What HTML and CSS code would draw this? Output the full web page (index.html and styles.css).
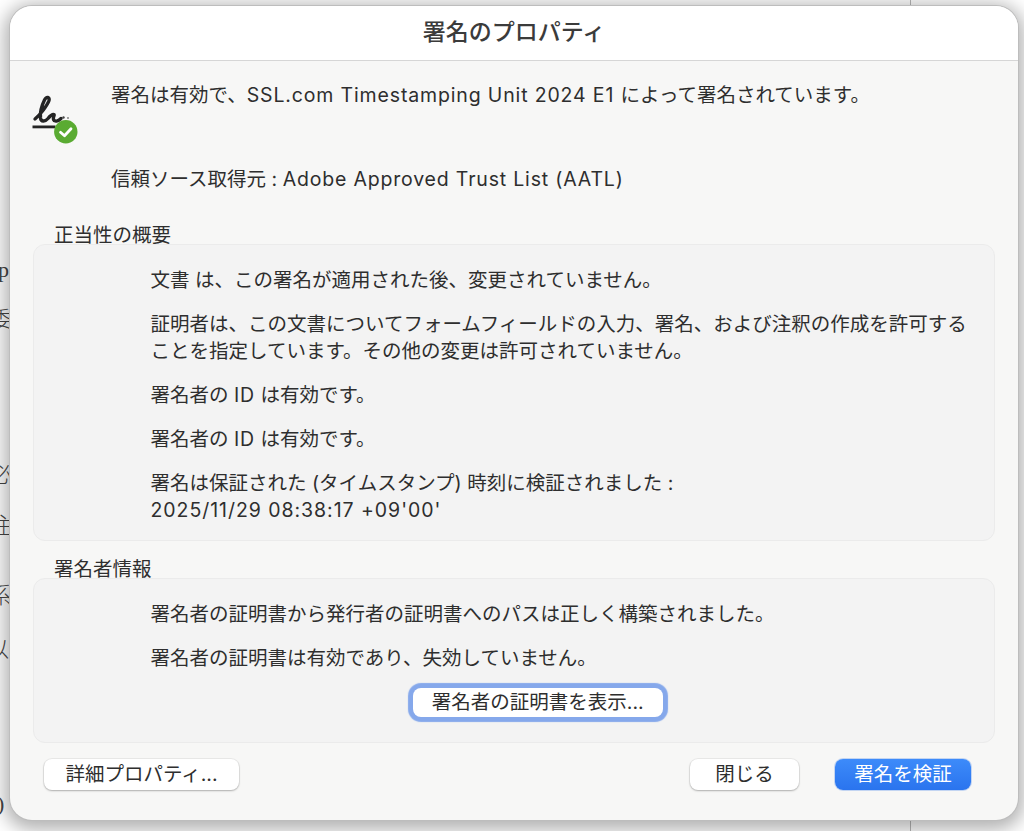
FILE: index.html
```html
<!DOCTYPE html>
<html lang="ja">
<head>
<meta charset="utf-8">
<title>署名のプロパティ</title>
<link rel="stylesheet" href="styles.css">
</head>
<body>
<div class="backdrop" aria-hidden="true">
  <span class="doc-rule"></span>
  <span class="doc-char c1">p</span>
  <span class="doc-char c2">委</span>
  <span class="doc-char c3">必</span>
  <span class="doc-char c4">注</span>
  <span class="doc-char c5">系</span>
  <span class="doc-char c6">以</span>
  <span class="doc-char c7">)</span>
</div>
<main class="dialog">
  <header class="titlebar">署名のプロパティ</header>
  <div class="content">
    <div class="status">
      <svg class="status-icon" width="50" height="56" viewBox="0 0 50 56">
        <path d="M5 29C10 25 17.500 15 19 10.500C20 7 16.500 6 14.500 10C12 15 10 23 10.500 28C11 32 15 32 18 28.500C20 26 21.500 24.500 23.500 24.500C25.500 24.500 22.500 27 23.500 29.500C24.500 32 28 31.500 31 28.500" fill="none" stroke="#242424" stroke-width="3.400" stroke-linecap="round" stroke-linejoin="round"/>
        <circle cx="33.500" cy="27.500" r="1.200" fill="#444"/>
        <circle cx="38" cy="28" r="0.900" fill="#777"/>
        <rect x="2.500" y="35.500" width="23" height="2.800" fill="#242424"/>
        <circle cx="35.800" cy="41.800" r="11.700" fill="#5aab32"/>
        <path d="M30.500 42.300L34.500 45.800L41 38.800" fill="none" stroke="#fff" stroke-width="2.800" stroke-linecap="round" stroke-linejoin="round"/>
      </svg>
      <div class="status-text">
        <p class="status-main">署名は有効で、<span class="lat">SSL.com Timestamping Unit 2024 E1 </span>によって署名されています。</p>
        <p class="status-source">信頼ソース取得元 : <span class="lat-trust">Adobe Approved Trust List (AATL)</span></p>
      </div>
    </div>

    <section class="group validity">
      <h2 class="group-label">正当性の概要</h2>
      <div class="panel panel-validity">
        <p>文書 は、この署名が適用された後、変更されていません。</p>
        <p>証明者は、この文書についてフォームフィールドの入力、署名、および注釈の作成を許可することを指定しています。その他の変更は許可されていません。</p>
        <p>署名者の <span class="lat">ID</span> は有効です。</p>
        <p>署名者の <span class="lat">ID</span> は有効です。</p>
        <p>署名は保証された (タイムスタンプ) 時刻に検証されました :<br><span class="lat-date">2025/11/29 08:38:17 +09'00'</span></p>
      </div>
    </section>

    <section class="group signer">
      <h2 class="group-label">署名者情報</h2>
      <div class="panel panel-signer">
        <p>署名者の証明書から発行者の証明書へのパスは正しく構築されました。</p>
        <p>署名者の証明書は有効であり、失効していません。</p>
        <div class="panel-action">
          <button class="btn btn-focus" type="button">署名者の証明書を表示...</button>
        </div>
      </div>
    </section>

    <footer class="actions">
      <button class="btn btn-advanced" type="button">詳細プロパティ...</button>
      <div class="actions-right">
        <button class="btn btn-close" type="button">閉じる</button>
        <button class="btn btn-primary" type="button">署名を検証</button>
      </div>
    </footer>
  </div>
</main>
</body>
</html>
```
FILE: styles.css
```css
* { box-sizing: border-box; }
html, body { margin: 0; height: 831px; overflow: hidden; }
body {
  position: relative;
  padding: 6px 6px 11px 10px;
  background: #fff;
  font-family: "Inter", "Noto Sans CJK JP", sans-serif;
  color: #2e2e2e;
}
p, h2 { margin: 0; font-weight: 400; }
.lat { letter-spacing: 0.85px; }
.lat-trust { letter-spacing: 0.82px; }
.lat-date { letter-spacing: 0.95px; }

.backdrop {
  position: absolute;
  inset: 0;
  overflow: hidden;
  font-family: "Liberation Serif", "Noto Sans CJK JP", serif;
  font-size: 22px;
  font-weight: 300;
  color: #444;
}
.doc-rule { position: absolute; left: 910px; top: 0; width: 1px; height: 831px; background: #b8b8b8; }
.doc-char { position: absolute; left: -2px; line-height: 24px; }
.c1 { top: 258px; }
.c2 { top: 308px; left: -10px; }
.c3 { top: 463px; left: -10px; }
.c4 { top: 514px; left: -10px; }
.c5 { top: 584px; left: -10px; }
.c6 { top: 638px; left: -13px; }
.c7 { top: 792px; left: -3px; }

.dialog {
  position: relative;
  height: 814px;
  width: 1008px;
  border-radius: 22px;
  overflow: hidden;
  background: #f7f7f6;
  box-shadow: 0 0 0 1px #bdbdbd, 0 4px 18px 6px rgba(0, 0, 0, 0.3);
}
.titlebar {
  height: 55px;
  background: #fff;
  border-bottom: 1px solid #d6d6d6;
  text-align: center;
  font-size: 23px;
  font-weight: 500;
  line-height: 52px;
  color: #3b3b3b;
}
.content { padding: 0 23px; font-size: 19.5px; line-height: 27px; }

.status { position: relative; height: 161px; }
.status-icon { position: absolute; left: -3px; top: 29px; }
.status-text { padding: 21px 0 0 78px; }
.status-main { margin-bottom: 57px; }

.group-label { font-size: 19.5px; line-height: 27px; padding-left: 21px; margin-bottom: -5px; position: relative; }
.panel {
  background: #f3f3f3;
  border: 1px solid #ebebeb;
  border-radius: 12px;
  padding: 21.5px 20px 0 116.5px;
}
.panel p + p { margin-top: 17px; }
.panel-validity { height: 297px; }
.signer { margin-top: 15px; }
.panel-signer { height: 165px; }
.panel-action { display: flex; justify-content: center; margin-top: 16px; padding-right: 49px; }

.btn {
  font-family: inherit;
  font-size: 19.5px;
  line-height: 27px;
  height: 31px;
  padding: 0;
  border: 0;
  border-radius: 8px;
  background: #fff;
  color: #2e2e2e;
  box-shadow: 0 0 0 1px rgba(0, 0, 0, 0.05), 0 1px 2px rgba(0, 0, 0, 0.25);
}
.btn-focus {
  width: 250px;
  height: 29px;
  box-shadow: 0 0 1px 5px #85a8eb;
}
.actions { display: flex; justify-content: space-between; margin-top: 15.5px; padding: 0 24px 0 11px; }
.actions-right { display: flex; gap: 36px; }
.btn-advanced { width: 195px; }
.btn-close { width: 109px; }
.btn-primary {
  width: 136px;
  color: #fff;
  background: linear-gradient(#3d8bfa, #2a74ee);
  box-shadow: 0 0 0 1px rgba(40, 110, 230, 0.25);
}
```
